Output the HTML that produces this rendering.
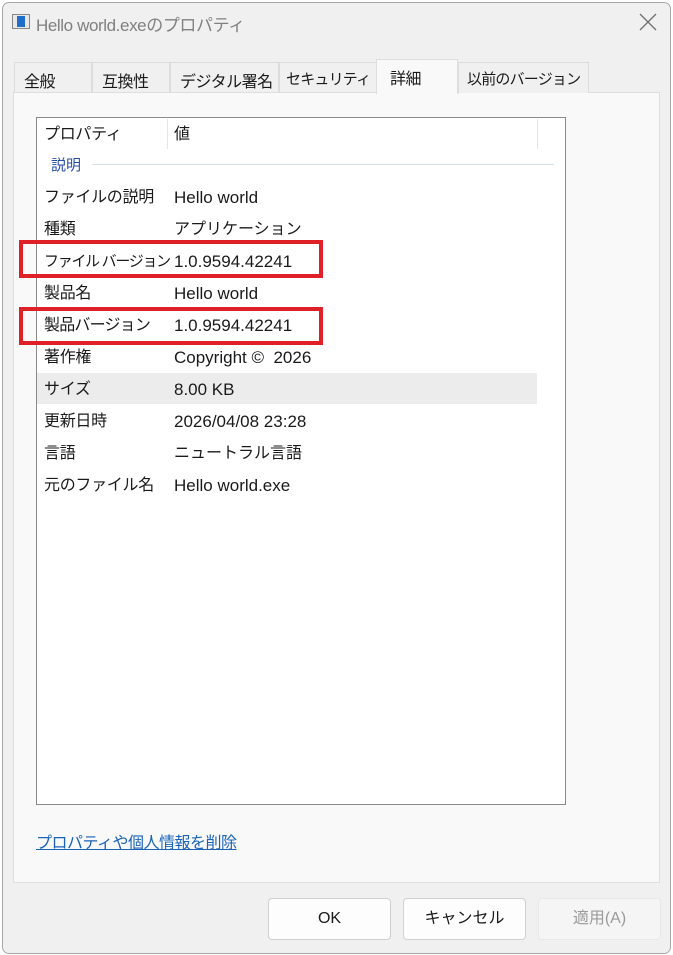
<!DOCTYPE html>
<html><head><meta charset="utf-8"><style>
*{margin:0;padding:0;box-sizing:border-box}
body{width:673px;height:955px;background:#fff;font-family:"Liberation Sans","Noto Sans CJK JP",sans-serif;color:#1a1a1a;position:relative;overflow:hidden}
.win{position:absolute;left:2px;top:2px;width:669px;height:952px;background:#f0f0f0;border:1px solid #a8a8a8;border-radius:7px}
.abs{position:absolute;white-space:nowrap}
.tab{position:absolute;top:62px;height:31px;background:#f0f0f0;border:1px solid #dcdcdc;border-bottom:none;font-size:16px;padding:5px 0 0 9px;white-space:nowrap;overflow:hidden;letter-spacing:-0.5px}
.panel{position:absolute;left:13px;top:92px;width:647px;height:791px;background:#f9f9f9;border:1px solid #dedede}
.list{position:absolute;left:36px;top:117px;width:530px;height:688px;background:#fff;border:1px solid #8a8a8a}
.row{position:absolute;left:7px;font-size:16px;height:32px;line-height:32px;white-space:nowrap;letter-spacing:-0.3px}
.row span{position:absolute;left:130px;white-space:nowrap;font-size:17px;letter-spacing:0}
.red{position:absolute;border:4px solid #e02027;left:19px;width:304px}
.btn{position:absolute;top:898px;width:123px;height:42px;background:#fdfdfd;border:1px solid #d0d0d0;border-radius:4px;font-size:16px;text-align:center;line-height:40px;white-space:nowrap}
</style></head><body>
<div class="win"></div>
<div class="abs" style="left:12px;top:14px;width:18px;height:15px;border:1px solid #888;background:#e8e8e8"><div style="position:absolute;left:4px;top:1px;width:8px;height:11px;background:#1f6fc8"></div></div>
<div class="abs" style="left:36px;top:11px;font-size:17px;color:#808080;letter-spacing:-0.4px">Hello world.exeのプロパティ</div>
<svg class="abs" style="left:639px;top:13px" width="18" height="18"><path d="M1 1L17 17M17 1L1 17" stroke="#707070" stroke-width="1.3"/></svg>
<div class="tab" style="left:14px;width:78px">全般</div>
<div class="tab" style="left:92px;width:78px">互換性</div>
<div class="tab" style="left:170px;width:109px">デジタル署名</div>
<div class="tab" style="left:279px;width:98px;padding-left:6px;font-size:15px;letter-spacing:-0.8px">セキュリティ</div>
<div class="panel"></div>
<div class="tab" style="left:376px;width:82px;top:59px;height:35px;background:#f9f9f9;border-color:#dedede;z-index:2;padding-left:13px">詳細</div>
<div class="tab" style="left:458px;width:131px;padding-left:8px;font-size:15px;letter-spacing:-0.8px">以前のバージョン</div>
<div class="list">
 <div class="abs" style="left:130px;top:1px;width:1px;height:30px;background:#e5e5e5"></div>
 <div class="abs" style="left:500px;top:1px;width:1px;height:30px;background:#e5e5e5"></div>
 <div class="row" style="top:1px">プロパティ<span style="font-size:16px">値</span></div>
 <div class="abs" style="left:14px;top:36px;font-size:15px;color:#2a4fa8">説明</div>
 <div class="abs" style="left:55px;top:46px;width:462px;height:1px;background:#d6e0ec"></div>
 <div class="abs" style="left:0;top:255px;width:500px;height:31px;background:#ececec"></div>
 <div class="row" style="top:64px">ファイルの説明<span>Hello world</span></div>
 <div class="row" style="top:96px">種類<span style="font-size:16px">アプリケーション</span></div>
 <div class="row" style="top:128px;letter-spacing:-1.3px;font-size:15px">ファイル バージョン<span>1.0.9594.42241</span></div>
 <div class="row" style="top:160px">製品名<span>Hello world</span></div>
 <div class="row" style="top:192px;letter-spacing:-0.8px">製品バージョン<span>1.0.9594.42241</span></div>
 <div class="row" style="top:224px">著作権<span>Copyright ©&nbsp; 2026</span></div>
 <div class="row" style="top:256px">サイズ<span>8.00 KB</span></div>
 <div class="row" style="top:288px">更新日時<span>2026/04/08 23:28</span></div>
 <div class="row" style="top:320px">言語<span style="font-size:16px">ニュートラル言語</span></div>
 <div class="row" style="top:352px">元のファイル名<span>Hello world.exe</span></div>
</div>
<div class="red" style="top:240px;height:38px"></div>
<div class="red" style="top:307px;height:38px"></div>
<div class="abs" style="left:36px;top:829px;font-size:16px;color:#1a63b8;text-decoration:underline;letter-spacing:-0.5px">プロパティや個人情報を削除</div>
<div class="btn" style="left:268px">OK</div>
<div class="btn" style="left:403px">キャンセル</div>
<div class="btn" style="left:538px;background:#f5f5f5;border-color:#e8e8e8;color:#9a9a9a">適用(A)</div>
</body></html>
